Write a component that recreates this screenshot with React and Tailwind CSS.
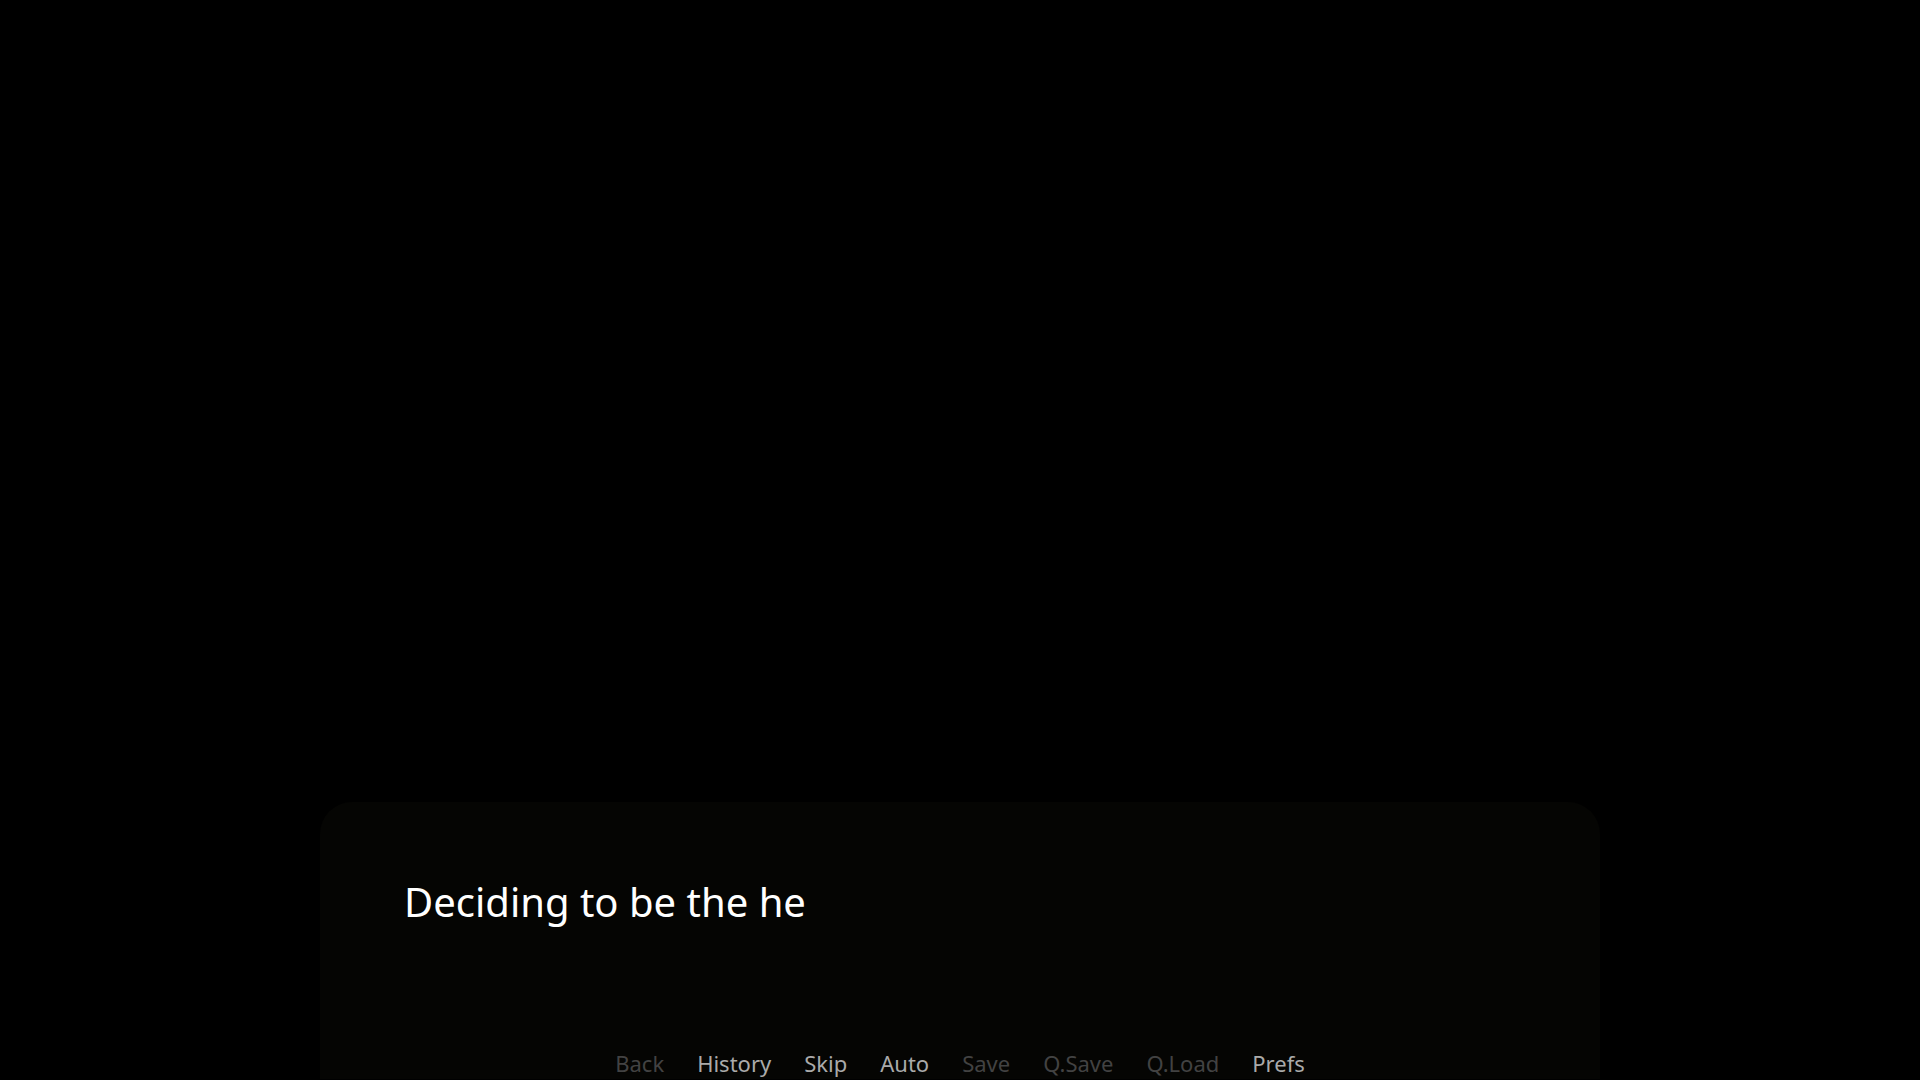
import React from 'react';

const ACTIONS = [
    { id: 'back', label: 'Back', disabled: true },
    { id: 'history', label: 'History' },
    { id: 'skip', label: 'Skip' },
    { id: 'auto', label: 'Auto' },
    { id: 'save', label: 'Save', disabled: true },
    { id: 'quick-save', label: 'Q.Save', disabled: true },
    { id: 'quick-load', label: 'Q.Load', disabled: true },
    { id: 'prefs', label: 'Prefs' },
];

const QuickMenu = () => (
    <nav className="flex justify-center gap-[33px] pb-0.5">
        {ACTIONS.map(action => (
            <button
                key={action.id}
                type="button"
                disabled={action.disabled}
                className="text-[22px] leading-7 text-[#aaaaaa] enabled:hover:text-white disabled:text-[#424242]"
            >
                {action.label}
            </button>
        ))}
    </nav>
);

const App = () => {
    return (
        <div className="min-h-screen flex flex-col justify-end items-center bg-black pb-px font-['Noto_Sans',sans-serif]">
            <main className="w-2/3 min-h-[277px] flex flex-col justify-between rounded-t-[32px] bg-[#050503]">
                <p className="px-21 pt-18 text-[40px] leading-14 text-white">
                    Deciding to be the he
                </p>
                <QuickMenu />
            </main>
        </div>
    );
};

export default App;
